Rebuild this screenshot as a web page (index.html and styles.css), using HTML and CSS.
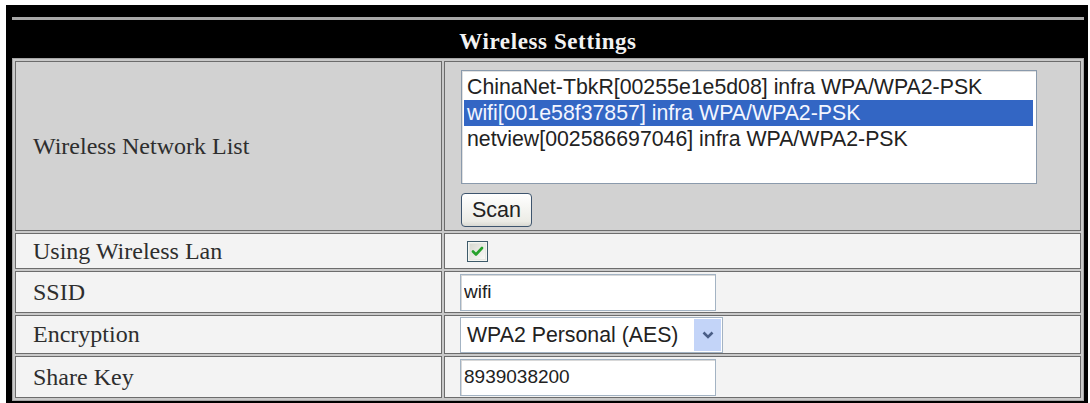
FILE: index.html
```html
<!DOCTYPE html>
<html>
<head>
<meta charset="utf-8">
<title>Wireless Settings</title>
<link rel="stylesheet" href="styles.css">
</head>
<body>
<div class="frame">
  <div class="rule"></div>
  <div class="title">Wireless Settings</div>
  <table class="form">
    <tr class="row-list">
      <td class="label">Wireless Network List</td>
      <td class="value value-top">
        <div class="listbox">
          <div class="opt">ChinaNet-TbkR[00255e1e5d08] infra WPA/WPA2-PSK</div>
          <div class="opt selected">wifi[001e58f37857] infra WPA/WPA2-PSK</div>
          <div class="opt">netview[002586697046] infra WPA/WPA2-PSK</div>
          <div class="opt"></div>
        </div>
        <button class="btn" type="button">Scan</button>
      </td>
    </tr>
    <tr class="row-check">
      <td class="label">Using Wireless Lan</td>
      <td class="value">
        <span class="checkbox">
          <svg width="21" height="21" viewBox="0 0 21 21">
            <defs>
              <linearGradient id="cb" x1="0" y1="0" x2="1" y2="1">
                <stop offset="0" stop-color="#d6d8d0"/>
                <stop offset="1" stop-color="#fbfbf8"/>
              </linearGradient>
            </defs>
            <rect x="0.5" y="0.5" width="20" height="20" fill="#f4f6f2" stroke="#3d5a6a"/>
            <rect x="2.5" y="2.5" width="16" height="16" fill="url(#cb)" stroke="#e6e8e2"/>
            <path d="M6 10.5 L9 13.5 L15 7" fill="none" stroke="#26a22a" stroke-width="2.6" stroke-linecap="round" stroke-linejoin="round"/>
          </svg>
        </span>
      </td>
    </tr>
    <tr class="row-ssid">
      <td class="label">SSID</td>
      <td class="value"><input class="field" type="text" value="wifi"></td>
    </tr>
    <tr class="row-enc">
      <td class="label">Encryption</td>
      <td class="value">
        <div class="select">
          <span class="select-text">WPA2 Personal (AES)</span>
          <span class="select-arrow">
            <svg width="12" height="8" viewBox="0 0 12 8"><path d="M1.5 1.5 L6 6 L10.5 1.5" fill="none" stroke="#4a5e86" stroke-width="2.6"/></svg>
          </span>
        </div>
      </td>
    </tr>
    <tr class="row-key">
      <td class="label">Share Key</td>
      <td class="value"><input class="field" type="text" value="8939038200"></td>
    </tr>
  </table>
</div>
</body>
</html>
```

FILE: styles.css
```css
html, body {
  margin: 0;
  padding: 0;
  background: #ffffff;
}

.frame {
  margin: 5px 0 0 6px;
  width: 1082px;
  box-sizing: border-box;
  background: #000000;
  padding: 12px 4px 4px 6px;
}

.rule {
  height: 3px;
  background: #a8a8a8;
}

.title {
  height: 38px;
  line-height: 44px;
  text-align: center;
  color: #f2f2f2;
  font-family: "Liberation Serif", "Times New Roman", serif;
  font-weight: bold;
  font-size: 23px;
  letter-spacing: 0.6px;
}

.form {
  width: 1072px;
  table-layout: fixed;
  border-collapse: separate;
  border-spacing: 2px;
  border: 1px solid #a6a6a6;
  background: #c9c9c9;
}

.form td {
  box-sizing: border-box;
  border: 1px solid #6c6c6c;
  padding: 0;
  background: #f3f3f3;
  vertical-align: middle;
}

.form td.label {
  width: 427px;
  padding-left: 17px;
  font-family: "Liberation Serif", "Times New Roman", serif;
  font-size: 24px;
  color: #2e2e2e;
}

.form td.value {
  padding-left: 15px;
}

.row-list td {
  height: 170px;
  background: #d2d2d2;
}

.row-list td.value-top {
  vertical-align: top;
  padding-top: 8px;
}

.row-check td { height: 36px; }
.row-ssid td { height: 42px; }
.row-enc td { height: 39px; }
.row-key td { height: 42px; }

.listbox {
  margin-left: 1px;
  width: 576px;
  height: 114px;
  box-sizing: border-box;
  border: 1px solid #8a9aac;
  box-shadow: inset 1px 1px 0 #e0e0e0;
  background: #ffffff;
  padding: 3px 3px 0 2px;
  font-family: "Liberation Sans", Arial, sans-serif;
  font-size: 21.3px;
  color: #222;
}

.opt {
  height: 26px;
  line-height: 26px;
  padding-left: 3px;
  white-space: nowrap;
}

.opt.selected {
  background: #3366c4;
  color: #f4f6ff;
}

.btn {
  display: block;
  margin: 9px 0 0 1px;
  width: 71px;
  height: 34px;
  box-sizing: border-box;
  border: 1px solid #3e556e;
  border-radius: 4px;
  background: linear-gradient(#ffffff, #ecece6 85%, #d9d9d2);
  font-family: "Liberation Sans", Arial, sans-serif;
  font-size: 21.5px;
  color: #222;
  padding: 0;
}

.checkbox {
  display: block;
  margin-left: 7px;
  width: 21px;
  height: 21px;
}

.checkbox svg {
  display: block;
}

.field {
  display: block;
  width: 256px;
  height: 37px;
  box-sizing: border-box;
  border: 1px solid #a3b3c3;
  box-shadow: inset 1px 1px 0 #d8d8d8;
  background: #ffffff;
  padding: 0 3px;
  margin: 0;
  font-family: "Liberation Sans", Arial, sans-serif;
  font-size: 19px;
  color: #222;
  outline: none;
}

.select {
  display: flex;
  align-items: stretch;
  width: 263px;
  height: 36px;
  box-sizing: border-box;
  border: 1px solid #a3b3c3;
  background: #ffffff;
}

.select-text {
  flex: 1;
  padding-left: 6px;
  line-height: 34px;
  font-family: "Liberation Sans", Arial, sans-serif;
  font-size: 21.3px;
  color: #222;
  white-space: nowrap;
}

.select-arrow {
  width: 27px;
  margin: 1px;
  background: #c3d4f8;
  display: flex;
  align-items: center;
  justify-content: center;
}

.select-arrow svg {
  display: block;
}
```
